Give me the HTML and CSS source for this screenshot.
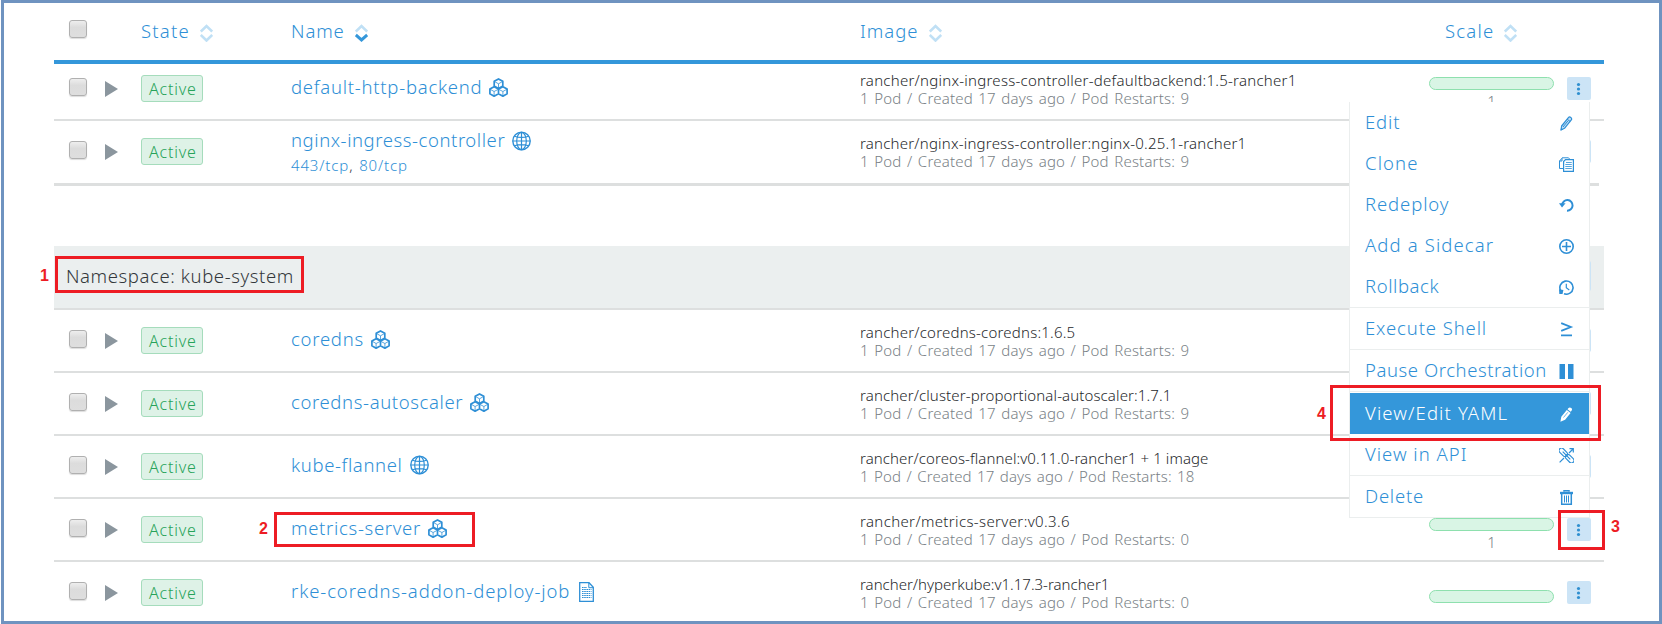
FILE: index.html
```
<!DOCTYPE html>
<html lang="en">
<head>
<meta charset="utf-8">
<title>Workloads</title>
<link rel="stylesheet" href="styles.css">
</head>
<body>
<svg class="defs" width="0" height="0">
  <symbol id="cubes" viewBox="0 0 19 19">
    <g fill="none" stroke="currentColor" stroke-linejoin="round">
      <path stroke-width="1.7" d="M9.5 .9l4.300 2.400v4.800l-4.300 2.300-4.300-2.300V3.300zM5.100 8.700l4.400 2.400v4.700L5.100 18.200.9 15.800v-4.700zM13.900 8.700l4.200 2.400v4.700l-4.200 2.400-4.400-2.400v-4.700z"/>
      <path stroke-width=".8" d="M5.500 3.500l4 2.300 4-2.300M9.500 5.800v4.500M1 11.200l4.100 2.300 4.400-2.300M5.100 13.500v4.500M9.500 11.200l4.400 2.300 4.100-2.300M13.900 13.500v4.500"/>
    </g>
  </symbol>
  <symbol id="globe" viewBox="0 0 19 20">
    <g fill="none" stroke="currentColor" stroke-width="1.200">
      <circle cx="9.500" cy="10" r="8.700" stroke-width="1.400"/>
      <ellipse cx="9.500" cy="10" rx="4.800" ry="8.700"/>
      <path d="M9.500 1.300v17.400M.8 10h17.400M2.500 5.200q7 2.400 14 0M2.500 14.800q7-2.400 14 0"/>
    </g>
  </symbol>
  <symbol id="doc" viewBox="0 0 15 20">
    <g fill="none" stroke="currentColor">
      <path stroke-width="1.300" d="M.7.7h9.300l4.300 4.600v14H.7z"/>
      <path d="M9.800.7v5h4.500"/>
      <path stroke-width="1" stroke-dasharray="1.600 .6" d="M3 5.500h5M3 7.500h9.500M3 9.500h9.500M3 11.500h9.500M3 13.500h9.500M3 15.500h9.500"/>
    </g>
  </symbol>
  <symbol id="sort" viewBox="0 0 13 18">
    <g fill="none" stroke="currentColor" stroke-width="2.600">
      <path d="M.8 7.500l5.700-5.500 5.700 5.500M.8 11l5.700 5.500 5.700-5.500"/>
    </g>
  </symbol>
  <symbol id="pencil" viewBox="0 0 15 15">
    <path fill="currentColor" fill-opacity=".3" stroke="currentColor" stroke-width="1.200" stroke-linejoin="round" d="M2 14l.6-4L9.400 1.600q1-1.200 2.400-.2 1.400 1.200.5 2.500L5.500 12.300z"/>
    <path fill="none" stroke="currentColor" d="M8.200 3.200l3 2.300M4 11l5-6.200"/>
    <path fill="currentColor" d="M1.600 14.500l.5-2.700 2 1.600z"/>
  </symbol>
  <symbol id="pencil-solid" viewBox="0 0 15 15">
    <path fill="currentColor" d="M1.400 14.700l.9-5L7.800 3l3.800 2.900-5.500 6.900zM8.500 2.200l.8-1c.9-1 1.900-1 2.900-.3s1.100 1.800.3 2.900l-.8 1z"/>
    <path stroke="#3497da" stroke-width=".7" d="M4.500 10.500l4.300-5.200"/>
  </symbol>
  <symbol id="clone" viewBox="0 0 15 15">
    <g fill="none" stroke="currentColor">
      <path d="M4 11.500H.5V4L3 1.200V4H.5M3 .8h6.500L11 2.500"/>
      <path stroke-width="1.200" d="M6.500 2.600h7.900v11.800H4.600V4.500z"/>
      <path stroke-width=".8" d="M7 5.500h5.800M6.300 7.500h6.500M6.300 9.500h6.500M6.300 11.500h6.500"/>
    </g>
  </symbol>
  <symbol id="redeploy" viewBox="0 0 15 15">
    <path fill="none" stroke="currentColor" stroke-width="2" d="M3 7A5.300 5.300 0 1 1 8 12.700"/>
    <path fill="currentColor" d="M0 5.300h6.600L3 9.500z"/>
  </symbol>
  <symbol id="plus" viewBox="0 0 15 15">
    <g fill="none" stroke="currentColor" stroke-width="1.600"><circle cx="7.500" cy="7.500" r="6.700"/><path d="M7.500 3v9M3 7.500h9"/></g>
  </symbol>
  <symbol id="rollback" viewBox="0 0 15 15">
    <path fill="none" stroke="currentColor" stroke-width="1.600" d="M1.700 10.800A6.600 6.600 0 1 1 5 13.700"/>
    <path fill="none" stroke="currentColor" stroke-width="1.200" d="M7.300 3.800v4l3 2.200"/>
    <path fill="currentColor" d="M0 9.200l4.400.8-.9 4H.3z"/>
  </symbol>
  <symbol id="shell" viewBox="0 0 15 15">
    <path fill="none" stroke="currentColor" stroke-width="1.800" d="M2.200 1.200l9.600 3.800-9.600 3.800M2 13.300h11"/>
  </symbol>
  <symbol id="pause" viewBox="0 0 15 15">
    <path fill="currentColor" d="M.5 0h5.500v15H.5zM9 0h5.500v15H9z"/>
  </symbol>
  <symbol id="api" viewBox="0 0 15 15">
    <g fill="none" stroke="currentColor" stroke-width="1.200">
      <rect x="-5" y="-2.500" width="10" height="5" rx="2.500" transform="translate(4.300 4.300) rotate(45)"/>
      <rect x="-5" y="-2.500" width="10" height="5" rx="2.500" transform="translate(10.700 10.700) rotate(45)"/>
      <path d="M3.700 3.700l7.600 7.600M.6 14.400L5 10M10 5l4-4M10.500.7h3.800v3.800"/>
    </g>
  </symbol>
  <symbol id="trash" viewBox="0 0 15 15">
    <path fill="none" stroke="currentColor" stroke-width="1.500" d="M2.700 4v10.200h9.600V4M5 1.800V.7h5v1.100"/>
    <path fill="none" stroke="currentColor" d="M5.500 5.500v7M7.500 5.500v7M9.500 5.500v7"/>
    <path fill="currentColor" d="M1 1.800h13v2.400H1z"/>
  </symbol>
  <symbol id="dots" viewBox="0 0 24 23">
    <g fill="currentColor"><circle cx="11.500" cy="7.500" r="1.600"/><circle cx="11.500" cy="12" r="1.600"/><circle cx="11.500" cy="16.500" r="1.600"/></g>
  </symbol>
</svg>

<main class="frame">
  <section class="table">
    <div class="grid head">
      <i class="check"></i><span></span>
      <div class="th"><span class="s128">State</span><svg class="sort"><use href="#sort"/></svg></div>
      <div class="th"><span class="s90">Name</span><svg class="sort" viewBox="0 0 13 18" fill="none" stroke-width="2.600"><path stroke="#c0e0f5" d="M.8 7.500l5.700-5.500 5.700 5.500"/><path stroke="#3497da" stroke-width="3" d="M.8 11l5.700 5 5.700-5"/></svg></div>
      <div class="th"><span class="s100">Image</span><svg class="sort"><use href="#sort"/></svg></div>
      <div class="th scale-head"><span class="s128">Scale</span><svg class="sort"><use href="#sort"/></svg></div>
      <span></span>
    </div>

    <div class="grid row first">
      <i class="check"></i><i class="tri"></i><span class="badge">Active</span>
      <div class="name"><a class="s75">default-http-backend</a><svg class="ic"><use href="#cubes"/></svg></div>
      <div class="image"><p class="s25">rancher/nginx-ingress-controller-defaultbackend:1.5-rancher1</p><p class="meta">1 Pod / Created 17 days ago / Pod Restarts: 9</p></div>
      <div class="scale"><i class="bar"></i><span>1</span></div>
      <button class="act"><svg><use href="#dots"/></svg></button>
    </div>
    <div class="grid row second">
      <i class="check"></i><i class="tri"></i><span class="badge">Active</span>
      <div class="name two"><a class="s56">nginx-ingress-controller</a><svg class="ic globe"><use href="#globe"/></svg><p class="ports">443/tcp<b>,</b> 80/tcp</p></div>
      <div class="image"><p class="s21">rancher/nginx-ingress-controller:nginx-0.25.1-rancher1</p><p class="meta">1 Pod / Created 17 days ago / Pod Restarts: 9</p></div>
      <div></div>
      <button class="act"><svg><use href="#dots"/></svg></button>
    </div>

    <div class="namespace"><span>Namespace: kube-system</span><button class="act tall"></button></div>

    <div class="grid row">
      <i class="check"></i><i class="tri"></i><span class="badge">Active</span>
      <div class="name"><a class="s75">coredns</a><svg class="ic"><use href="#cubes"/></svg></div>
      <div class="image"><p class="s21">rancher/coredns-coredns:1.6.5</p><p class="meta">1 Pod / Created 17 days ago / Pod Restarts: 9</p></div>
      <div></div>
      <button class="act"><svg><use href="#dots"/></svg></button>
    </div>
    <div class="grid row">
      <i class="check"></i><i class="tri"></i><span class="badge">Active</span>
      <div class="name"><a class="s64">coredns-autoscaler</a><svg class="ic"><use href="#cubes"/></svg></div>
      <div class="image"><p class="s12">rancher/cluster-proportional-autoscaler:1.7.1</p><p class="meta">1 Pod / Created 17 days ago / Pod Restarts: 9</p></div>
      <div></div>
      <button class="act"><svg><use href="#dots"/></svg></button>
    </div>
    <div class="grid row">
      <i class="check"></i><i class="tri"></i><span class="badge">Active</span>
      <div class="name"><a class="s64">kube-flannel</a><svg class="ic globe"><use href="#globe"/></svg></div>
      <div class="image"><p class="s10">rancher/coreos-flannel:v0.11.0-rancher1 + 1 image</p><p class="meta s16">1 Pod / Created 17 days ago / Pod Restarts: 18</p></div>
      <div></div>
      <button class="act"><svg><use href="#dots"/></svg></button>
    </div>
    <div class="grid row">
      <i class="check"></i><i class="tri"></i><span class="badge">Active</span>
      <div class="name"><a class="s69">metrics-server</a><svg class="ic"><use href="#cubes"/></svg></div>
      <div class="image"><p class="s38">rancher/metrics-server:v0.3.6</p><p class="meta">1 Pod / Created 17 days ago / Pod Restarts: 0</p></div>
      <div class="scale"><i class="bar"></i><span>1</span></div>
      <button class="act"><svg><use href="#dots"/></svg></button>
    </div>
    <div class="grid row">
      <i class="check"></i><i class="tri"></i><span class="badge">Active</span>
      <div class="name"><a class="s90">rke-coredns-addon-deploy-job</a><svg class="ic doc"><use href="#doc"/></svg></div>
      <div class="image"><p>rancher/hyperkube:v1.17.3-rancher1</p><p class="meta">1 Pod / Created 17 days ago / Pod Restarts: 0</p></div>
      <div class="scale low"><i class="bar"></i></div>
      <button class="act"><svg><use href="#dots"/></svg></button>
    </div>
  </section>
</main>

<nav class="menu">
  <a><span class="s90">Edit</span><svg><use href="#pencil"/></svg></a>
  <a><span class="s120">Clone</span><svg><use href="#clone"/></svg></a>
  <a><span class="s90">Redeploy</span><svg><use href="#redeploy"/></svg></a>
  <a><span class="s112">Add a Sidecar</span><svg><use href="#plus"/></svg></a>
  <a><span class="s56">Rollback</span><svg><use href="#rollback"/></svg></a>
  <hr>
  <a><span class="s90">Execute Shell</span><svg><use href="#shell"/></svg></a>
  <hr>
  <a><span class="s56">Pause Orchestration</span><svg><use href="#pause"/></svg></a>
  <hr class="thick">
  <a class="on"><span class="s112">View/Edit YAML</span><svg><use href="#pencil-solid"/></svg></a>
  <a><span class="s100">View in API</span><svg><use href="#api"/></svg></a>
  <hr>
  <a><span class="s75">Delete</span><svg><use href="#trash"/></svg></a>
</nav>

<div class="box b1"></div><span class="num n1">1</span>
<div class="box b2"></div><span class="num n2">2</span>
<div class="box b3"></div><span class="num n3">3</span>
<div class="box b4"></div><span class="num n4">4</span>
</body>
</html>
```
FILE: styles.css
```
* { box-sizing: border-box; }
body {
  margin: 0;
  width: 1662px;
  height: 624px;
  overflow: hidden;
  position: relative;
  background: #fff;
  font: 300 18.5px/26px "Noto Sans", sans-serif;
  color: #2e8fd6;
}
p { margin: 0; }
.defs { display: block; position: absolute; }

.frame {
  height: 624px;
  margin-left: 1px;
  border: 3px solid #6f93c0;
  overflow: hidden;
}
.table { width: 1550px; margin-left: 50px; }
.grid {
  display: grid;
  grid-template-columns: 51px 36px 150px 569px 569px 138px 37px;
  align-items: start;
}

.head { height: 61px; border-bottom: 4px solid #3497da; }
.head .check { margin-top: 17px; }
.th { display: flex; align-items: center; gap: 10px; margin-top: 15px; }
.scale-head { padding-left: 16px; }
.sort { width: 13px; height: 18px; margin-top: 4px; color: #c0e0f5; }

.row { height: 63px; padding-top: 6px; border-bottom: 2px solid #dddfdf; }
.row.first { height: 57px; padding-top: 0; }
.row.second { width: 1545px; height: 65px; border-bottom-width: 3px; margin-bottom: 60px; }

.check {
  width: 18px;
  height: 18px;
  margin: 14px 0 0 15px;
  border: 1.500px solid #b0b0b0;
  border-radius: 3px;
  background: linear-gradient(#eee, #dcdcdc 40%, #dedede);
  box-shadow: 0 1px 1px #ddd;
}
.tri {
  width: 0;
  height: 0;
  margin-top: 17px;
  border-left: 13px solid #8b969e;
  border-top: 8px solid transparent;
  border-bottom: 8px solid transparent;
}
.badge {
  width: 62px;
  height: 27px;
  margin-top: 11px;
  border: 1px solid #a5dcbc;
  border-radius: 3px;
  background: #def2e7;
  color: #27a35a;
  font-size: 16px;
  line-height: 26px;
  letter-spacing: .800px;
  padding-left: 7px;
}
.name { display: flex; flex-wrap: wrap; align-items: center; column-gap: 7px; padding-top: 10px; }
.name.two { padding-top: 0; }
.name.two .ic { margin-top: 1px; }
.name a { display: block; }
.ic { width: 19px; height: 19px; margin-top: 0; }
.ic.globe { height: 20px; }
.ic.doc { width: 15px; height: 20px; margin-top: 2px; margin-left: 2px; }
.ports { width: 100%; margin-top: 3px; font-size: 15px; line-height: 18px; letter-spacing: .860px; word-spacing: 1px; }
.ports b { color: #3d4247; font-weight: 300; }
.image { padding-top: 7px; font-size: 15px; line-height: 18px; color: #26282b; white-space: nowrap; }
.meta { color: #797f86; letter-spacing: .190px; word-spacing: 1.400px; }
.scale { width: 125px; padding-top: 13px; text-align: center; font-size: 15px; line-height: 18px; color: #797f86; }
.scale.low { padding-top: 22px; }
.scale span { display: block; margin-top: 2px; }
.bar { display: block; height: 13px; border: 1px solid #8ee0ae; border-radius: 7px; background: #d9f5e5; }
.act {
  display: block;
  width: 24px;
  height: 23px;
  margin: 13px 0 0;
  padding: 0;
  border: 0;
  border-radius: 2px;
  background: #cce4f6;
  color: #2f8fd0;
}
.act svg { display: block; width: 24px; height: 23px; }

.namespace {
  display: flex;
  justify-content: space-between;
  height: 64px;
  padding: 17px 13px 0 12px;
  border-bottom: 2px solid #dddfdf;
  background: #ebefef;
  color: #33373b;
  letter-spacing: .600px;
}
.act.tall { height: 30px; margin-top: -2px; }

.menu {
  position: absolute;
  left: 1349px;
  top: 102px;
  width: 241px;
  border: 1px solid #ebeeee;
  border-top: 0;
  background: #fff;
}
.menu a {
  display: flex;
  justify-content: space-between;
  align-items: center;
  height: 41px;
  padding: 0 15px 2px 15px;
  white-space: nowrap;
}
.menu svg { width: 15px; height: 15px; margin-top: 3px; }
.menu hr { height: 1px; margin: 0; border: 0; background: #ebeeee; }
.menu hr.thick { margin-bottom: 1px; }
.menu .on { background: #3497da; color: #fff; }

.box { position: absolute; border: 3px solid #ed1c24; }
.b1 { left: 55px; top: 256px; width: 249px; height: 37px; }
.b2 { left: 274px; top: 512px; width: 201px; height: 35px; }
.b3 { left: 1558px; top: 510px; width: 47px; height: 40px; }
.b4 { left: 1330px; top: 385px; width: 271px; height: 56px; }
.num { position: absolute; color: #ed1c24; font: bold 16px/18px "Liberation Sans", Arial, sans-serif; }
.n1 { left: 40px; top: 267px; }
.n2 { left: 259px; top: 520px; }
.n3 { left: 1611px; top: 518px; }
.n4 { left: 1317px; top: 405px; }

/* tracking steps */
.s10 { letter-spacing: .090px; }
.s12 { letter-spacing: .115px; }
.s21 { letter-spacing: .210px; }
.s25 { letter-spacing: .250px; }
.s38 { letter-spacing: .360px; }
.meta.s16 { letter-spacing: .110px; }
.s56 { letter-spacing: .570px; }
.s64 { letter-spacing: .630px; }
.s69 { letter-spacing: .680px; }
.s75 { letter-spacing: .750px; }
.s90 { letter-spacing: .890px; }
.s100 { letter-spacing: 1px; }
.s112 { letter-spacing: 1.120px; }
.s120 { letter-spacing: 1.100px; }
.s128 { letter-spacing: 1.200px; }
```
